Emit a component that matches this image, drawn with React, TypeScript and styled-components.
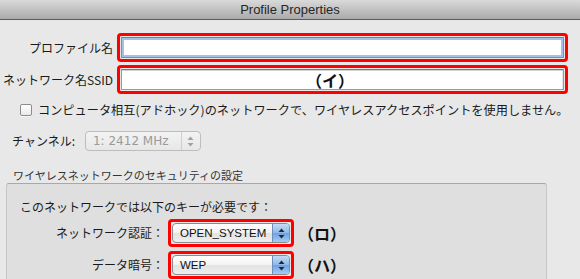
import React from "react";
import styled, { createGlobalStyle } from "styled-components";

const GlobalStyle = createGlobalStyle`
  html, body {
    margin: 0;
    padding: 0;
    background: #e8e8e8;
  }
  body {
    font-family: "Noto Sans CJK JP", "Liberation Sans", sans-serif;
    color: #1a1a1a;
  }
`;

const Window = styled.div`
  width: 580px;
  height: 279px;
  overflow: hidden;
  background: #e8e8e8;
  display: flex;
  flex-direction: column;
`;

const TitleBar = styled.div`
  flex: none;
  height: 20px;
  box-sizing: border-box;
  background: linear-gradient(#dadada, #aaaaaa);
  border-bottom: 1px solid #5c5c5c;
  display: flex;
  align-items: center;
  justify-content: center;
  font-family: "Liberation Sans", Arial, sans-serif;
  font-size: 13px;
  color: #262626;
`;

const FieldGrid = styled.div`
  margin-top: 13px;
  display: grid;
  grid-template-columns: 113px 451px;
  column-gap: 4px;
  row-gap: 3px;
  align-items: center;
`;

const Label = styled.label`
  font-size: 12px;
  line-height: 16px;
  text-align: right;
  white-space: nowrap;
  color: #1a1a1a;
`;

const RedFrame = styled.div`
  box-sizing: border-box;
  border: 3px solid #ff0000;
  border-radius: 4px;
  padding: 1px;
  background: #e8e8e8;
`;

const TextField = styled.div<{ focused?: boolean }>`
  box-sizing: border-box;
  height: 21px;
  background: #ffffff;
  border: 1px solid ${(p) => (p.focused ? "#6d90c6" : "#9a9a9a")};
  border-top-color: ${(p) => (p.focused ? "#5f83bb" : "#7c7c7c")};
  box-shadow: ${(p) =>
    p.focused
      ? "inset 0 0 0 2px #a4c0e6"
      : "inset 0 1px 0 #d0d0d0, inset -1px 0 0 #e2e2e2"};
  display: flex;
  align-items: center;
  padding-left: 184px;
`;

const Annotation = styled.span`
  font-size: 16px;
  font-weight: 700;
  line-height: 18px;
  color: #111111;
  white-space: nowrap;
`;

const CheckRow = styled.div`
  margin-top: 8px;
  height: 16px;
  padding-left: 20px;
  display: flex;
  align-items: center;
  gap: 6px;
  font-size: 12.2px;
  line-height: 16px;
  white-space: nowrap;
`;

const CheckBox = styled.span`
  width: 12px;
  height: 12px;
  flex: none;
  box-sizing: border-box;
  border: 1px solid #8c8c8c;
  border-radius: 2px;
  background: linear-gradient(#ffffff, #e9e9e9);
  box-shadow: 0 1px 0 rgba(255, 255, 255, 0.6);
`;

const ChannelRow = styled.div`
  margin-top: 13px;
  height: 20px;
  padding-left: 12px;
  display: flex;
  align-items: center;
  gap: 10px;
  font-size: 12px;
  line-height: 16px;
`;

const Select = styled.div<{ disabled?: boolean; width: number }>`
  box-sizing: border-box;
  width: ${(p) => p.width}px;
  height: 20px;
  border: 1px solid ${(p) => (p.disabled ? "#bdbdbd" : "#8a8a8a")};
  border-radius: 4px;
  background: ${(p) =>
    p.disabled
      ? "linear-gradient(#f3f3f3, #e7e7e7)"
      : "linear-gradient(#ffffff, #f2f2f2 50%, #e3e3e3 51%, #eeeeee)"};
  display: flex;
  align-items: stretch;
  overflow: hidden;
  font-family: ${(p) =>
    p.disabled
      ? '"DejaVu Sans", sans-serif'
      : '"Liberation Sans", Arial, sans-serif'};
  font-size: ${(p) => (p.disabled ? 12 : 11.5)}px;
  color: ${(p) => (p.disabled ? "#9a9a9a" : "#111111")};
`;

const SelectText = styled.span`
  flex: 1;
  display: flex;
  align-items: center;
  padding-left: 7px;
  white-space: nowrap;
`;

const Stepper = styled.span<{ disabled?: boolean }>`
  width: ${(p) => (p.disabled ? 18 : 16)}px;
  flex: none;
  display: flex;
  align-items: center;
  justify-content: center;
  border-left: 1px solid ${(p) => (p.disabled ? "#cfcfcf" : "#6c8fbf")};
  background: ${(p) =>
    p.disabled
      ? "transparent"
      : "linear-gradient(#c4dbf6, #8fb8ea 50%, #6ea1e2 51%, #a6cbf3)"};
`;

const SectionLabel = styled.div`
  margin-top: 17px;
  padding-left: 13px;
  height: 14px;
  font-size: 11px;
  line-height: 14px;
  color: #333333;
  white-space: nowrap;
`;

const Group = styled.div`
  margin: 1px 0 0 6px;
  width: 541px;
  flex: 1;
  box-sizing: border-box;
  background: #dfdfdf;
  border: 1px solid #c6c6c6;
  border-top-color: #a8a8a8;
  border-bottom: none;
  border-radius: 3px 3px 0 0;
  padding-top: 15px;
`;

const Intro = styled.div`
  padding-left: 13px;
  font-size: 12px;
  line-height: 16px;
  white-space: nowrap;
`;

const KeyGrid = styled.div`
  margin-top: 4px;
  display: grid;
  grid-template-columns: 157px 126px auto;
  column-gap: 4px;
  row-gap: 4px;
  align-items: center;
`;

const Arrows: React.FC<{ color: string }> = ({ color }) => (
  <svg width="7" height="11" viewBox="0 0 7 11">
    <path d="M3.5 0.5 L6.5 4 H0.5 Z" fill={color} />
    <path d="M3.5 10.5 L6.5 7 H0.5 Z" fill={color} />
  </svg>
);

const App: React.FC = () => {
  return (
    <Window>
      <GlobalStyle />
      <TitleBar>Profile Properties</TitleBar>
      <FieldGrid>
        <Label>プロファイル名</Label>
        <RedFrame>
          <TextField focused />
        </RedFrame>
        <Label>ネットワーク名SSID</Label>
        <RedFrame>
          <TextField>
            <Annotation>（イ）</Annotation>
          </TextField>
        </RedFrame>
      </FieldGrid>
      <CheckRow>
        <CheckBox />
        コンピュータ相互(アドホック)のネットワークで、ワイヤレスアクセスポイントを使用しません。
      </CheckRow>
      <ChannelRow>
        <span>チャンネル:</span>
        <Select disabled width={116}>
          <SelectText>1: 2412 MHz</SelectText>
          <Stepper disabled>
            <Arrows color="#a0a0a0" />
          </Stepper>
        </Select>
      </ChannelRow>
      <SectionLabel>ワイヤレスネットワークのセキュリティの設定</SectionLabel>
      <Group>
        <Intro>このネットワークでは以下のキーが必要です：</Intro>
        <KeyGrid>
          <Label>ネットワーク認証：</Label>
          <RedFrame>
            <Select width={118}>
              <SelectText>OPEN_SYSTEM</SelectText>
              <Stepper>
                <Arrows color="#1e2a3a" />
              </Stepper>
            </Select>
          </RedFrame>
          <Annotation>（ロ）</Annotation>
          <Label>データ暗号：</Label>
          <RedFrame>
            <Select width={118}>
              <SelectText>WEP</SelectText>
              <Stepper>
                <Arrows color="#1e2a3a" />
              </Stepper>
            </Select>
          </RedFrame>
          <Annotation>（ハ）</Annotation>
        </KeyGrid>
      </Group>
    </Window>
  );
};

export default App;
